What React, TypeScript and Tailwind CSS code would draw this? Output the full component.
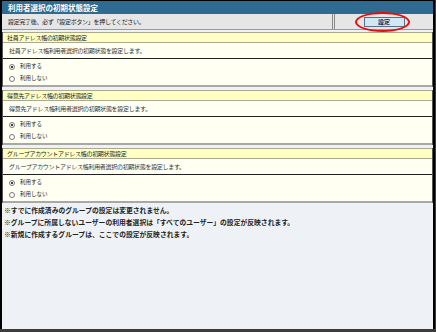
import React from "react";

function Radio({ checked, label }: { checked: boolean; label: string }) {
  return (
    <div className="flex items-center h-[12px] pl-[6px] gap-[5px]">
      <span className="w-[6px] h-[6px] rounded-full border border-[#7a7a7a] bg-white flex items-center justify-center">
        {checked && <span className="w-[2px] h-[2px] rounded-full bg-black" />}
      </span>
      <span className="text-[5.5px] leading-none text-[#222]">{label}</span>
    </div>
  );
}

function Section({ title, desc }: { title: string; desc: string }) {
  return (
    <div className="border-x border-[#555]">
      <div className="h-[11px] bg-[#ffffc4] border-y border-[#a9a98e] flex items-center pl-[4px] text-[6px] tracking-[-0.3px] leading-none text-[#222]">
        {title}
      </div>
      <div className="h-[15px] bg-[#fffff2] flex items-center pl-[6px] text-[6px] tracking-[-0.3px] leading-none text-[#333]">
        {desc}
      </div>
      <div className="border-t border-[#222] bg-[#fffff2] h-[29px] pt-[2px] border-b-2 border-b-[#a8a8a8]">
        <Radio checked label="利用する" />
        <Radio checked={false} label="利用しない" />
      </div>
    </div>
  );
}

export default function App() {
  return (
    <div className="w-[436px] h-[332px] bg-[#3c3c3c] font-['Noto_Sans_CJK_JP',sans-serif]">
      <div className="w-[435px] h-[329px] border-l-2 border-r-2 border-t border-black bg-[#eef2f6] flex flex-col">
        <div className="h-[13px] bg-[#2f6b91] flex items-center pl-[6px] text-white font-bold text-[7.5px] leading-none">
          利用者選択の初期状態設定
        </div>
        <div className="h-[16px] bg-[#e6e6e6] border-b border-[#9a9a9a] flex">
          <div className="flex-1 flex items-center pl-[6px] text-[6px] tracking-[-0.3px] leading-none text-[#222]">
            設定完了後、必ず「設定ボタン」を押してください。
          </div>
          <div className="w-[101px] border-l-[3px] border-double border-[#8a8a8a] flex items-center justify-center">
            <div className="relative">
              <div className="w-[41px] h-[10px] bg-[#cfe8f4] border border-[#5b6f88] flex items-center justify-center text-[6px] font-bold text-[#1a2a5a] leading-none">
                設定
              </div>
              <div className="absolute left-[-9px] top-[-5px] w-[55px] h-[20px] rounded-[50%] border-2 border-[#e01010]" />
            </div>
          </div>
        </div>
        <div className="flex flex-col gap-[3px] mt-[2px]">
          <Section title="社員アドレス帳の初期状態設定" desc="社員アドレス帳利用者選択の初期状態を設定します。" />
          <Section title="得意先アドレス帳の初期状態設定" desc="得意先アドレス帳利用者選択の初期状態を設定します。" />
          <Section title="グループアカウントアドレス帳の初期状態設定" desc="グループアカウントアドレス帳利用者選択の初期状態を設定します。" />
        </div>
        <div className="mt-[1px] pl-[2px] flex flex-col text-[6.8px] font-bold leading-[12px] text-[#222]">
          <div>※すでに作成済みのグループの設定は変更されません。</div>
          <div>※グループに所属しないユーザーの利用者選択は「すべてのユーザー」の設定が反映されます。</div>
          <div>※新規に作成するグループは、ここでの設定が反映されます。</div>
        </div>
      </div>
    </div>
  );
}
